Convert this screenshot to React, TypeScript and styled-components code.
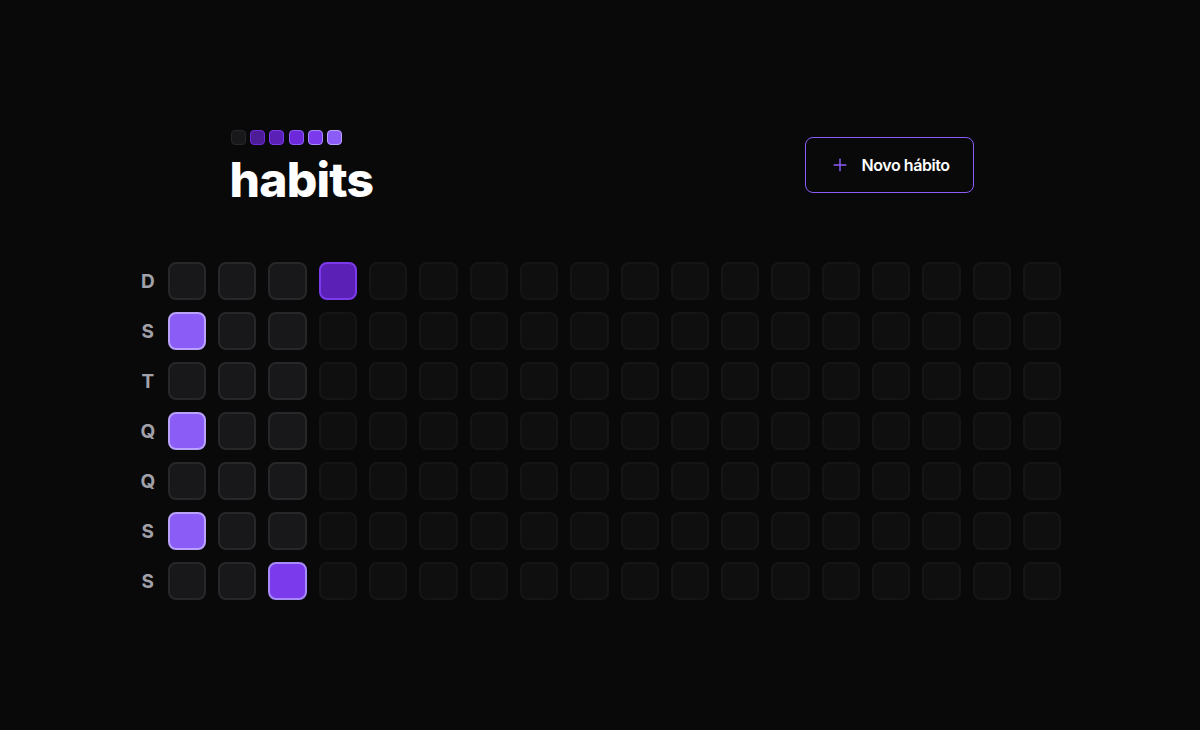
import styled, { createGlobalStyle } from "styled-components";
import { Plus } from "lucide-react";

const GlobalStyle = createGlobalStyle`
  * {
    box-sizing: border-box;
  }

  body {
    margin: 0;
    background: #09090a;
    color: #fff;
    font-family: Inter, "Noto Sans", sans-serif;
  }
`;

type Level = 0 | 1 | 2 | 3 | 4 | 5;

const levels: Record<Level, { bg: string; border: string }> = {
  0: { bg: "#18181b", border: "#27272a" },
  1: { bg: "#4c1d95", border: "#6d28d9" },
  2: { bg: "#5b21b6", border: "#7c3aed" },
  3: { bg: "#6d28d9", border: "#8b5cf6" },
  4: { bg: "#7c3aed", border: "#a78bfa" },
  5: { bg: "#8b5cf6", border: "#b9a2fb" },
};

const weekDays = ["D", "S", "T", "Q", "Q", "S", "S"];

// filled days: index = column * 7 + row
const filled: Record<number, Level> = {
  1: 5,
  3: 5,
  5: 5,
  20: 4,
  21: 2,
};

const PAST_DAYS = 22;
const TOTAL_DAYS = 18 * 7;

const App = () => {
  const days = Array.from({ length: TOTAL_DAYS }, (_, i) => i);

  return (
    <>
      <GlobalStyle />
      <Page>
        <Content>
          <Header>
            <Logo>
              <LogoSquares>
                {([0, 1, 2, 3, 4, 5] as Level[]).map((l) => (
                  <LogoSquare key={l} $level={l} />
                ))}
              </LogoSquares>
              <Title>habits</Title>
            </Logo>
            <NewButton type="button">
              <Plus size={20} color="#8b5cf6" strokeWidth={1.75} />
              Novo hábito
            </NewButton>
          </Header>

          <Table>
            <WeekLabels>
              {weekDays.map((d, i) => (
                <WeekLabel key={i}>{d}</WeekLabel>
              ))}
            </WeekLabels>
            <DayGrid>
              {days.map((i) =>
                i < PAST_DAYS ? (
                  <Day key={i} $level={filled[i] ?? 0} />
                ) : (
                  <Day key={i} $level={0} $disabled />
                )
              )}
            </DayGrid>
          </Table>
        </Content>
      </Page>
    </>
  );
};

const Page = styled.div`
  width: 100%;
  height: 100vh;
  display: flex;
  align-items: center;
  justify-content: center;
`;

const Content = styled.div`
  display: flex;
  flex-direction: column;
  align-items: center;
  gap: 58px;
`;

const Header = styled.div`
  width: 743px;
  margin-left: 4px;
  display: flex;
  align-items: center;
  justify-content: space-between;
`;

const Logo = styled.div`
  display: flex;
  flex-direction: column;
  gap: 11px;
`;

const LogoSquares = styled.div`
  display: flex;
  gap: 4.4px;
`;

const LogoSquare = styled.div<{ $level: Level }>`
  width: 15px;
  height: 15px;
  border-radius: 4px;
  background: ${({ $level }) => levels[$level].bg};
  border: 1.5px solid ${({ $level }) => levels[$level].border};
`;

const Title = styled.h1`
  margin: 0 0 0 -1px;
  font-size: 48px;
  line-height: 48px;
  font-weight: 800;
  letter-spacing: -0.8px;
  color: #fff;
`;

const NewButton = styled.button`
  display: flex;
  align-items: center;
  gap: 12px;
  margin-bottom: 5px;
  padding: 15px 23px 15px 24px;
  background: transparent;
  border: 1px solid #8b5cf6;
  border-radius: 8px;
  color: #fff;
  font-family: Inter, "Noto Sans", sans-serif;
  font-size: 16px;
  line-height: 24px;
  font-weight: 600;
  letter-spacing: -0.45px;
  cursor: pointer;
`;

const Table = styled.div`
  display: flex;
  gap: 11px;
`;

const WeekLabels = styled.div`
  display: grid;
  grid-template-rows: repeat(7, 38px);
  row-gap: 12px;
  width: 18px;
`;

const WeekLabel = styled.div`
  display: flex;
  align-items: center;
  justify-content: center;
  font-size: 19px;
  font-weight: 700;
  color: #a1a1aa;
`;

const DayGrid = styled.div`
  display: grid;
  grid-template-rows: repeat(7, 38px);
  grid-auto-flow: column;
  grid-auto-columns: 38.3px;
  gap: 12px;
`;

const Day = styled.div<{ $level: Level; $disabled?: boolean }>`
  border-radius: 8px;
  background: ${({ $level }) => levels[$level].bg};
  border: 2px solid ${({ $level }) => levels[$level].border};
  opacity: ${({ $disabled }) => ($disabled ? 0.4 : 1)};
`;

export default App;
